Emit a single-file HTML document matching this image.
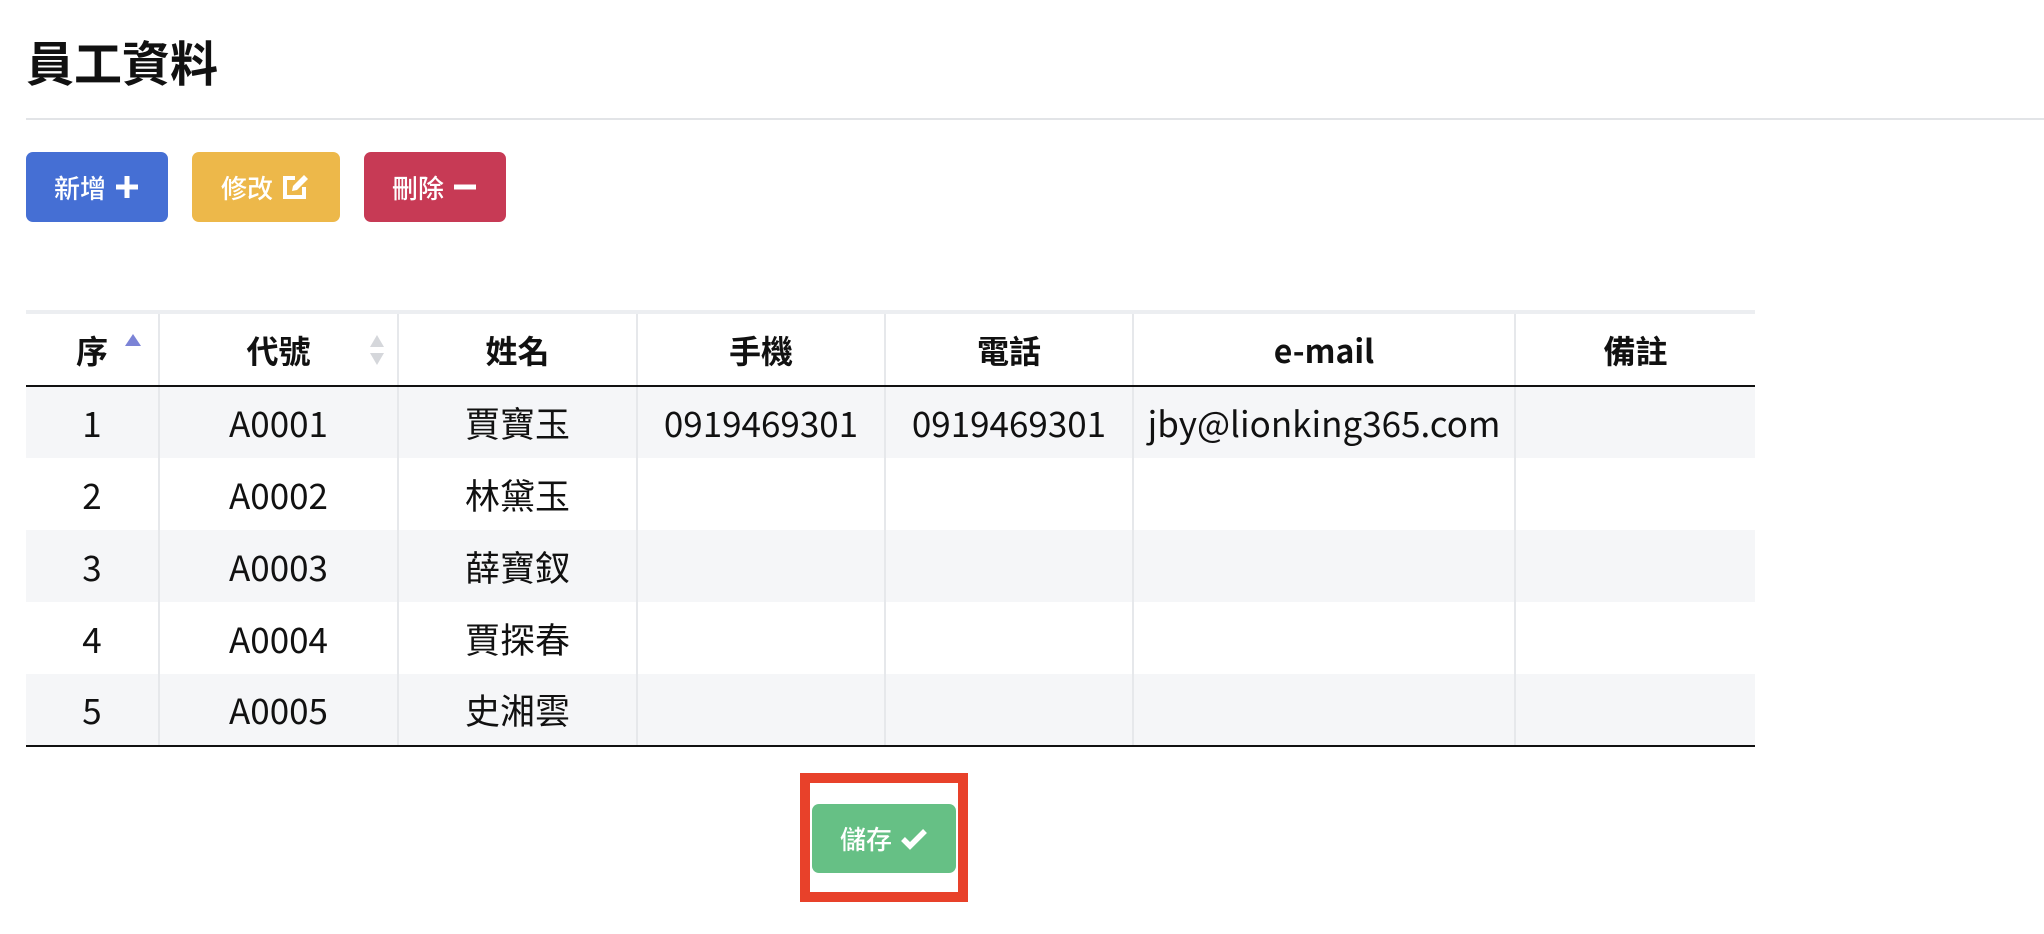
<!DOCTYPE html>
<html><head><meta charset="utf-8"><style>
*{margin:0;padding:0;box-sizing:border-box}
body{width:2044px;height:934px;background:#fff;position:relative;overflow:hidden;font-family:"Noto Sans CJK TC",sans-serif;color:#111}
h1{position:absolute;left:26px;top:28px;font-size:48px;font-weight:bold;font-family:"Noto Sans CJK TC",sans-serif;line-height:64px}
.hr{position:absolute;left:26px;right:0;top:118px;height:2px;background:#e2e4e7}
.btn{position:absolute;top:152px;height:70px;border-radius:7px;color:#fff;font-family:"Noto Sans CJK TC",sans-serif;font-size:26px;font-weight:500;display:flex;align-items:center;justify-content:center;gap:8px}
.btn svg{display:block}
table{position:absolute;left:26px;top:310px;border-collapse:collapse;border-top:4px solid #eceef1;font-size:35px;font-family:"Noto Sans CJK TC",sans-serif}
td,th{border-left:2px solid #e6e8eb;text-align:center;height:72px;padding:0;position:relative}
td:first-child,th:first-child{border-left:none}
th{font-weight:bold;font-family:"Noto Sans CJK TC",sans-serif;font-size:32px;height:74px;border-bottom:2px solid #111}
tr.g td{background:#f5f6f8}
tbody tr:last-child td{border-bottom:2px solid #111}
.box{position:absolute;left:800px;top:773px;width:168px;height:129px;border:10px solid #e8412a}
</style></head><body>
<h1>員工資料</h1>
<div class="hr"></div>
<div class="btn" style="left:26px;width:142px;background:#456fd4">新增<svg width="26" height="26" viewBox="0 0 26 26"><path d="M13 2v22M2 13h22" stroke="#fff" stroke-width="5"/></svg></div>
<div class="btn" style="left:192px;width:148px;background:#edb84a">修改<svg width="30" height="28" viewBox="0 0 30 28"><path d="M14 5H4v19h19V14" fill="none" stroke="#fff" stroke-width="4"/><path d="M11 18l1-5L23 2l4 4-11 11z" fill="#fff"/></svg></div>
<div class="btn" style="left:364px;width:142px;background:#c73a55">刪除<svg width="26" height="26" viewBox="0 0 26 26"><path d="M2 13h22" stroke="#fff" stroke-width="5"/></svg></div>
<table>
<colgroup><col style="width:133px"><col style="width:239px"><col style="width:239px"><col style="width:248px"><col style="width:248px"><col style="width:382px"><col style="width:240px"></colgroup>
<thead><tr><th>序<svg style="position:absolute;left:98px;top:19px" width="18" height="15"><path d="M9 1L17 13H1z" fill="#7b83d6"/></svg></th><th>代號<svg style="position:absolute;left:208px;top:20px" width="18" height="32"><path d="M9 1L16 13H2z M9 31L16 19H2z" fill="#d5d7db"/></svg></th><th>姓名</th><th>手機</th><th>電話</th><th>e-mail</th><th>備註</th></tr></thead>
<tbody>
<tr class="g"><td>1</td><td>A0001</td><td>賈寶玉</td><td>0919469301</td><td>0919469301</td><td>jby@lionking365.com</td><td></td></tr>
<tr><td>2</td><td>A0002</td><td>林黛玉</td><td></td><td></td><td></td><td></td></tr>
<tr class="g"><td>3</td><td>A0003</td><td>薛寶釵</td><td></td><td></td><td></td><td></td></tr>
<tr><td>4</td><td>A0004</td><td>賈探春</td><td></td><td></td><td></td><td></td></tr>
<tr class="g"><td>5</td><td>A0005</td><td>史湘雲</td><td></td><td></td><td></td><td></td></tr>
</tbody></table>
<div class="box"></div>
<div class="btn" style="left:812px;top:804px;width:144px;height:69px;background:#66c085">儲存<svg width="28" height="24" viewBox="0 0 28 24"><path d="M3 12l7 7L25 4" fill="none" stroke="#fff" stroke-width="5.5"/></svg></div>
</body></html>
